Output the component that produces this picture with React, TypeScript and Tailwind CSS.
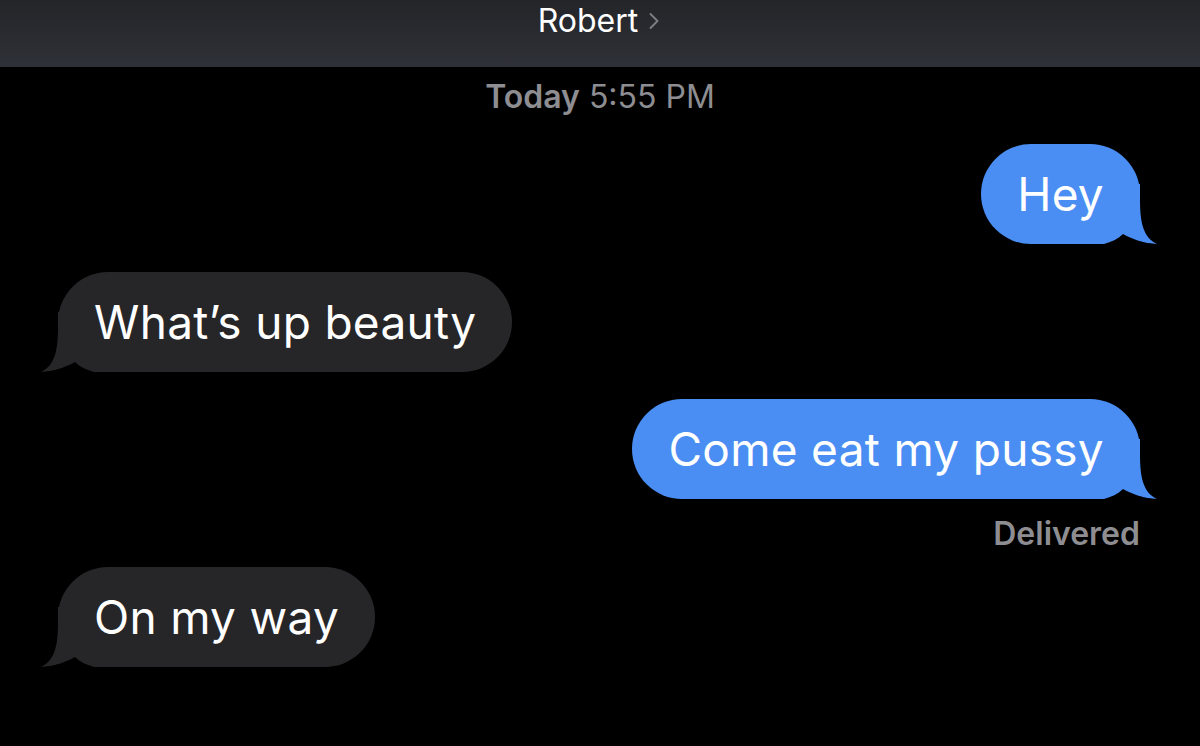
import { ChevronRight } from 'lucide-react'

type Side = 'me' | 'them'

interface Message {
  text: string
  from: Side
}

const messages: Message[] = [
  { text: 'Hey', from: 'me' },
  { text: 'What’s up beauty', from: 'them' },
  { text: 'Come eat my pussy', from: 'me' },
  { text: 'On my way', from: 'them' },
]

const FONT = { fontFamily: 'Inter, "Noto Sans", sans-serif' }

// tail drawn for the right-hand bubble; mirrored for the left one
function Tail({ side }: { side: Side }) {
  const fill = side === 'me' ? '#4a8ef4' : '#262628'
  return (
    <svg
      width="60"
      height="60"
      viewBox="0 0 60 60"
      aria-hidden="true"
      className={
        side === 'me'
          ? 'absolute -right-[18px] bottom-0'
          : 'absolute -left-[18px] bottom-0 -scale-x-100'
      }
    >
      <path d="M42 0 L42 16 C42 40 46 54 59 60 C48 60 36 56 25 50 L0 50 L0 0 Z" fill={fill} />
      <path d="M6 60 C13 58 20 55 25 50 C36 56 48 60 59 60 Z" fill="#000" />
    </svg>
  )
}

function Bubble({ text, from }: Message) {
  const mine = from === 'me'
  return (
    <div className={mine ? 'flex justify-end pr-[60px]' : 'flex justify-start pl-[58px]'}>
      <div
        className={
          'relative h-[100px] flex items-center px-[36px] text-[46px] tracking-[0.3px] text-white rounded-[50px] ' +
          (mine ? 'bg-[#4a8ef4] rounded-br-none' : 'bg-[#262628] rounded-bl-none')
        }
      >
        <span className="relative z-10">{text}</span>
        <Tail side={from} />
      </div>
    </div>
  )
}

export default function App() {
  return (
    <div className="w-[1200px] h-[746px] bg-black overflow-hidden" style={FONT}>
      <header className="h-[67px] bg-gradient-to-b from-[#232529] to-[#2e3137] flex justify-center">
        <div className="flex items-center h-[42px] gap-[2px] pl-[6px]">
          <span className="text-[32px] text-white">Robert</span>
          <ChevronRight className="w-[28px] h-[28px] text-[#7d7f84]" strokeWidth={1.6} />
        </div>
      </header>

      <div className="text-center text-[32px] text-[#8d8d92] mt-[12px] leading-[36px]">
        <span className="font-semibold">Today</span> 5:55 PM
      </div>

      <div className="mt-[29px] flex flex-col">
        <Bubble {...messages[0]} />
        <div className="mt-[28px]">
          <Bubble {...messages[1]} />
        </div>
        <div className="mt-[27px]">
          <Bubble {...messages[2]} />
        </div>
        <div className="flex justify-end pr-[60px] mt-[17px] text-[32px] font-semibold text-[#8d8d92] leading-[36px]">
          Delivered
        </div>
        <div className="mt-[15px]">
          <Bubble {...messages[3]} />
        </div>
      </div>
    </div>
  )
}
